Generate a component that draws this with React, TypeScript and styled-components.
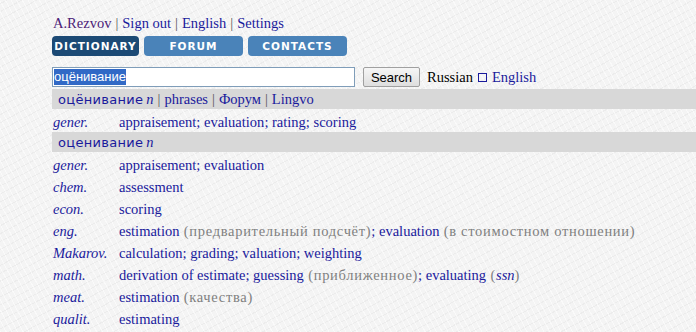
import styled, { createGlobalStyle } from 'styled-components';

const GlobalStyle = createGlobalStyle`
  html, body {
    margin: 0;
    padding: 0;
  }
  body {
    width: 696px;
    height: 332px;
    overflow: hidden;
    font-family: "Liberation Serif", "Times New Roman", serif;
    font-size: 14.5px;
    background-color: #f4f4f4;
    background-image:
      repeating-linear-gradient(62deg, rgba(255, 255, 255, 0.55) 0 1px, transparent 1px 5px),
      repeating-linear-gradient(-28deg, rgba(200, 200, 200, 0.18) 0 1px, transparent 1px 7px);
  }
`;

const Page = styled.div`
  display: flex;
  flex-direction: column;
  padding: 15px 0 0 52px;
`;

const UserBar = styled.div`
  display: flex;
  align-items: center;
  height: 16px;
  padding-left: 1px;
  line-height: 16px;
  color: #000;
`;

const Link = styled.a<{ $visited?: boolean }>`
  color: ${(p) => (p.$visited ? '#4b2177' : '#1a1a9c')};
  text-decoration: none;
`;

const Sep = styled.span`
  color: #555;
  margin: 0 4px;
`;

const Nav = styled.div`
  display: flex;
  gap: 5px;
  margin-top: 5px;
`;

const NavButton = styled.div<{ $active?: boolean; $w: number }>`
  width: ${(p) => p.$w}px;
  height: 20px;
  border-radius: 4px;
  display: flex;
  align-items: center;
  justify-content: center;
  background: ${(p) => (p.$active ? '#1c4a75' : '#4a83b9')};
  color: #fff;
  font-family: "DejaVu Sans", Verdana, sans-serif;
  font-weight: bold;
  font-size: 10.5px;
  letter-spacing: 1px;
`;

const SearchRow = styled.div`
  display: flex;
  align-items: center;
  margin-top: 11px;
  height: 20px;
`;

const SearchInput = styled.div`
  box-sizing: border-box;
  width: 303px;
  height: 20px;
  border: 1px solid #7f9db9;
  background: #fff;
  display: flex;
  align-items: center;
  padding-left: 1px;
  font-family: "Liberation Sans", Arial, sans-serif;
  font-size: 13px;
`;

const Selected = styled.span`
  background: #3169c6;
  color: #fff;
  line-height: 16px;
`;

const SearchButton = styled.div`
  box-sizing: border-box;
  margin-left: 8px;
  width: 57px;
  height: 20px;
  border: 1px solid #a0a0a0;
  border-radius: 2px;
  background: linear-gradient(#f6f6f6, #dedede);
  display: flex;
  align-items: center;
  justify-content: center;
  font-family: "Liberation Sans", Arial, sans-serif;
  font-size: 13px;
  color: #000;
`;

const LangText = styled.span`
  margin-left: 7px;
  color: #000;
`;

const Box = styled.span`
  display: inline-block;
  width: 7px;
  height: 7px;
  border: 1px solid #1a1a9c;
  margin: 0 5px 0 5px;
`;

const GrayBar = styled.div<{ $gap?: number }>`
  height: 20px;
  margin-top: ${(p) => p.$gap ?? 2}px;
  margin-right: -10px;
  background: #d8d8d8;
  display: flex;
  align-items: center;
  padding-left: 6px;
  color: #1a1a9c;
`;

const Headword = styled.span`
  font-family: "DejaVu Sans", Verdana, sans-serif;
  font-size: 13px;
  letter-spacing: 0.3px;
  color: #1a1a9c;
`;

const Pos = styled.i`
  color: #1a1a9c;
  margin-left: 3px;
`;

const Rows = styled.div`
  display: flex;
  flex-direction: column;
`;

const Row = styled.div`
  box-sizing: border-box;
  display: grid;
  grid-template-columns: 66px 1fr;
  height: 22px;
  padding-top: 4px;
  align-items: center;
  padding-left: 1px;
  white-space: nowrap;
`;

const Subject = styled.i`
  color: #1a1a9c;
`;

const Trans = styled.span`
  color: #1a1a9c;
`;

const Note = styled.span`
  color: #808080;
  letter-spacing: 0.7px;
`;

type Part = [string, 'link' | 'note' | 'plain' | 'ital'];
type Entry = { subj: string; parts: Part[] };

const entries: Entry[] = [
  { subj: 'gener.', parts: [['appraisement', 'link'], ['; ', 'plain'], ['evaluation', 'link']] },
  { subj: 'chem.', parts: [['assessment', 'link']] },
  { subj: 'econ.', parts: [['scoring', 'link']] },
  {
    subj: 'eng.',
    parts: [
      ['estimation', 'link'],
      [' (предварительный подсчёт)', 'note'],
      ['; ', 'plain'],
      ['evaluation', 'link'],
      [' (в стоимостном отношении)', 'note'],
    ],
  },
  {
    subj: 'Makarov.',
    parts: [
      ['calculation', 'link'],
      ['; ', 'plain'],
      ['grading', 'link'],
      ['; ', 'plain'],
      ['valuation', 'link'],
      ['; ', 'plain'],
      ['weighting', 'link'],
    ],
  },
  {
    subj: 'math.',
    parts: [
      ['derivation of estimate', 'link'],
      ['; ', 'plain'],
      ['guessing', 'link'],
      [' (приближенное)', 'note'],
      ['; ', 'plain'],
      ['evaluating', 'link'],
      [' (', 'note'],
      ['ssn', 'ital'],
      [')', 'note'],
    ],
  },
  { subj: 'meat.', parts: [['estimation', 'link'], [' (качества)', 'note']] },
  { subj: 'qualit.', parts: [['estimating', 'link']] },
];

const firstLine: Part[] = [
  ['appraisement', 'link'],
  ['; ', 'plain'],
  ['evaluation', 'link'],
  ['; ', 'plain'],
  ['rating', 'link'],
  ['; ', 'plain'],
  ['scoring', 'link'],
];

const renderParts = (parts: Part[]) =>
  parts.map(([text, kind], i) => {
    if (kind === 'note') return <Note key={i}>{text}</Note>;
    if (kind === 'ital') return <Subject key={i}>{text}</Subject>;
    return <Trans key={i}>{text}</Trans>;
  });

const App = () => {
  return (
    <>
      <GlobalStyle />
      <Page>
        <UserBar>
          <Link $visited>A.Rezvov</Link>
          <Sep>|</Sep>
          <Link>Sign out</Link>
          <Sep>|</Sep>
          <Link>English</Link>
          <Sep>|</Sep>
          <Link>Settings</Link>
        </UserBar>
        <Nav>
          <NavButton $active $w={87}>DICTIONARY</NavButton>
          <NavButton $w={99}>FORUM</NavButton>
          <NavButton $w={99}>CONTACTS</NavButton>
        </Nav>
        <SearchRow>
          <SearchInput>
            <Selected>оцёнивание</Selected>
          </SearchInput>
          <SearchButton>Search</SearchButton>
          <LangText>Russian</LangText>
          <Box />
          <Link>English</Link>
        </SearchRow>
        <GrayBar>
          <Headword>оцёнивание</Headword>
          <Pos>n</Pos>
          <Sep>|</Sep>
          <Link>phrases</Link>
          <Sep>|</Sep>
          <Link>Форум</Link>
          <Sep>|</Sep>
          <Link>Lingvo</Link>
        </GrayBar>
        <Row>
          <Subject>gener.</Subject>
          <span>{renderParts(firstLine)}</span>
        </Row>
        <GrayBar $gap={1}>
          <Headword>оценивание</Headword>
          <Pos>n</Pos>
        </GrayBar>
        <Rows>
          {entries.map((e) => (
            <Row key={e.subj}>
              <Subject>{e.subj}</Subject>
              <span>{renderParts(e.parts)}</span>
            </Row>
          ))}
        </Rows>
      </Page>
    </>
  );
};

export default App;
